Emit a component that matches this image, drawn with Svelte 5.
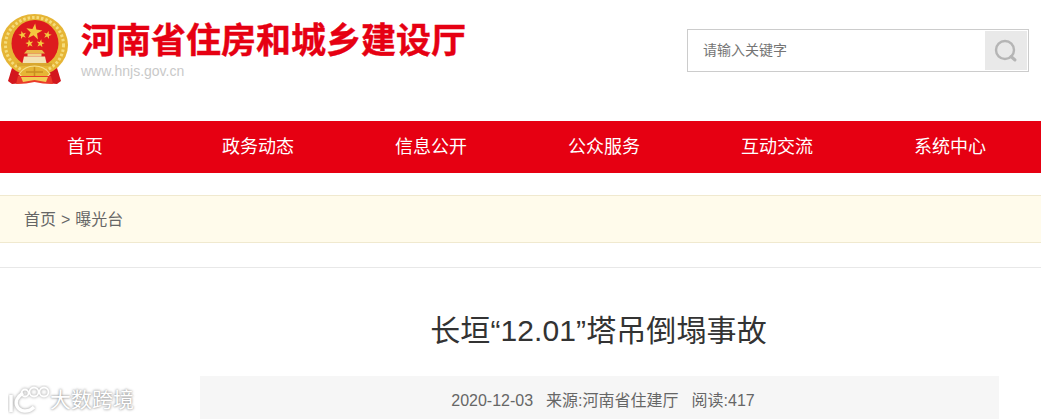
<script>
  const navItems = ['首页', '政务动态', '信息公开', '公众服务', '互动交流', '系统中心'];

  function star(cx, cy, r, rot = 0) {
    const pts = [];
    for (let i = 0; i < 10; i++) {
      const rad = i % 2 === 0 ? r : r * 0.4;
      const a = (-90 + rot + i * 36) * (Math.PI / 180);
      pts.push(`${(cx + rad * Math.cos(a)).toFixed(2)},${(cy + rad * Math.sin(a)).toFixed(2)}`);
    }
    return pts.join(' ');
  }

  const stars = [
    star(34, 18, 8.500, 8),
    star(22.500, 21, 4.200, -15),
    star(47.500, 21, 4.200, 15),
    star(29.500, 29.500, 4.200, -10),
    star(40.500, 29.500, 4.200, 10)
  ];
</script>

<div class="page">
  <header class="header">
    <div class="brand">
      <svg class="emblem" viewBox="0 0 70 74" width="70" height="74" aria-hidden="true">
        <path d="M12 54 L8 67 L12 70 L24 69 L24 56 Z" fill="#d3171d" />
        <path d="M57 54 L61 67 L57 70 L45 69 L45 56 Z" fill="#d3171d" />
        <ellipse cx="34.500" cy="31" rx="33.500" ry="31" fill="#e6b535" />
        <ellipse cx="34.500" cy="31" rx="29" ry="27.500" fill="none" stroke="#f5dc7c" stroke-width="3" stroke-dasharray="2.500 2" />
        <circle cx="35" cy="29.500" r="23.500" fill="#dd1a1e" />
        {#each stars as s}
          <polygon points={s} fill="#f4c93f" />
        {/each}
        <path d="M27 36 H42 L45 39.500 H24 Z" fill="#e9b94c" />
        <rect x="27.500" y="39.500" width="14" height="3" fill="#f0d48a" />
        <path d="M24 42.500 H45 L46.500 49 H22.500 Z" fill="#f3e2b5" />
        <rect x="17" y="49" width="35" height="3" fill="#d9a72f" />
        <path d="M19 60 C24 53 29 52 34.500 52 C40 52 45 53 50 60 L46 64 H23 Z" fill="#e6b535" stroke="#f7e28d" stroke-width="1.200" />
        <path d="M26 58 H43 M34.500 53 V63" stroke="#c98f1f" stroke-width="1.500" />
        <path d="M18 62 H51 L53 70 L43 69.500 L34.500 68 L26 69.500 L16 70 Z" fill="#ea3a2a" />
        <path d="M21 63 H48 L46 68 L34.500 66 L23 68 Z" fill="#f2cd55" />
      </svg>
      <div class="brand-text">
        <div class="site-name">河南省住房和城乡建设厅</div>
        <div class="site-url">www.hnjs.gov.cn</div>
      </div>
    </div>
    <div class="search">
      <span class="placeholder">请输入关键字</span>
      <button class="search-btn" type="button" aria-label="搜索">
        <svg viewBox="0 0 24 24" width="24" height="24" fill="none" stroke="#b5b5b5" stroke-width="2.400" aria-hidden="true">
          <circle cx="11" cy="11" r="9" />
          <path d="M17 17.500 L21 21" stroke-linecap="round" stroke-width="3" />
        </svg>
      </button>
    </div>
  </header>

  <nav class="nav">
    <ul class="nav-list">
      {#each navItems as item}
        <li>{item}</li>
      {/each}
    </ul>
  </nav>

  <div class="crumbs">首页 &gt; 曝光台</div>
  <div class="divider"></div>

  <main class="article">
    <h1>长垣“12.01”塔吊倒塌事故</h1>
    <div class="meta">
      <span>2020-12-03</span>
      <span>来源:河南省住建厅</span>
      <span>阅读:417</span>
    </div>
  </main>

  <div class="watermark">
    <svg viewBox="0 0 44 30" width="44" height="30" fill="none" stroke="#fff" aria-hidden="true">
      <g class="wm-shadow">
        <path d="M3 10 V27" stroke-width="3.500" />
        <path d="M15 8 C9 12 7 17 9 21 C12 27 20 28 26 22" stroke-width="3.500" />
        <circle cx="17" cy="8" r="3.500" stroke-width="1.800" />
        <circle cx="26" cy="7" r="4.500" stroke-width="1.800" />
        <circle cx="36" cy="7" r="4.500" stroke-width="1.800" />
      </g>
    </svg>
    <span class="wm-text">大数跨境</span>
  </div>
</div>

<style>
  :global(body) {
    margin: 0;
    background: #fff;
  }

  .page {
    position: relative;
    height: 419px;
    overflow: hidden;
    font-family: "Liberation Sans", "Noto Sans CJK SC", sans-serif;
    color: #666;
  }

  .header {
    display: flex;
    justify-content: space-between;
    height: 121px;
    padding-right: 12px;
  }

  .brand {
    display: flex;
    align-items: flex-start;
    padding-top: 14px;
  }

  .emblem {
    flex: none;
  }

  .brand-text {
    margin-left: 11px;
    padding-top: 5px;
  }

  .site-name {
    font-size: 35px;
    line-height: 44px;
    font-weight: 700;
    color: #e60012;
    white-space: nowrap;
    -webkit-text-stroke: 0.4px #e60012;
  }

  .site-url {
    font-size: 14px;
    line-height: 16px;
    color: #c9c9c9;
  }

  .search {
    display: flex;
    align-items: stretch;
    box-sizing: border-box;
    width: 342px;
    height: 43px;
    margin-top: 29px;
    padding: 1px;
    border: 1px solid #ccc;
  }

  .placeholder {
    flex: 1;
    padding-left: 14px;
    font-size: 14px;
    line-height: 39px;
    color: #757575;
  }

  .search-btn {
    display: flex;
    align-items: center;
    justify-content: center;
    width: 42px;
    padding: 0;
    border: 0;
    background: #e9e9e9;
  }

  .nav {
    height: 52px;
    background: #e60012;
  }

  .nav-list {
    display: grid;
    grid-template-columns: repeat(6, 173px);
    margin: 0 0 0 -1.500px;
    padding: 0;
    list-style: none;
  }

  .nav-list li {
    font-size: 18px;
    line-height: 52px;
    text-align: center;
    color: #fff;
  }

  .crumbs {
    box-sizing: border-box;
    height: 48px;
    margin-top: 22px;
    padding-left: 24px;
    border-top: 1px solid #f0e9cf;
    border-bottom: 1px solid #f0e9cf;
    background: #fffbeb;
    font-size: 16px;
    line-height: 48px;
    word-spacing: 0.500px;
    color: #666;
  }

  .divider {
    height: 1px;
    margin-top: 24px;
    background: #e8e8e8;
  }

  .article {
    display: flex;
    flex-direction: column;
    align-items: center;
    width: 799px;
    margin-left: 200px;
  }

  h1 {
    margin: 43px 2px 0 0;
    font-size: 30px;
    line-height: 40px;
    font-weight: 400;
    letter-spacing: 0.100px;
    color: #333;
    white-space: nowrap;
  }

  .meta {
    box-sizing: border-box;
    display: flex;
    justify-content: center;
    gap: 13px;
    width: 100%;
    height: 60px;
    margin-top: 25px;
    padding-left: 7px;
    background: #f6f6f6;
    font-size: 16px;
    line-height: 50px;
    color: #666;
  }

  .watermark {
    position: absolute;
    left: 8px;
    top: 382px;
    display: flex;
    align-items: center;
    font-size: 21px;
    line-height: 36px;
    font-weight: 400;
    color: #fff;
    text-shadow: 0 0 3px #999, 0 0 2px #aaa;
  }

  .wm-text {
    margin-left: -2px;
  }

  .wm-shadow {
    filter: drop-shadow(0 0 1.500px #999);
  }
</style>
